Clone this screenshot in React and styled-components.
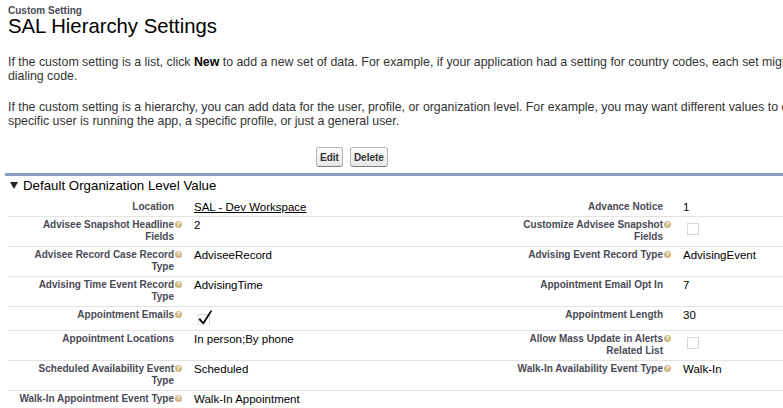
import React from 'react'
import styled, { createGlobalStyle } from 'styled-components'

const GlobalStyle = createGlobalStyle`
  html, body {
    margin: 0;
    padding: 0;
    background: #fff;
    overflow: hidden;
  }
  body {
    font-family: Arial, "Liberation Sans", Helvetica, sans-serif;
    color: #000;
  }
`

const Page = styled.div`
  width: 978px;
  padding: 5px 8px 0 8px;
`

const Kicker = styled.div`
  font-size: 10px;
  font-weight: bold;
  line-height: 11px;
  color: #4a4a56;
`

const Title = styled.h1`
  margin: 0;
  font-size: 20.3px;
  font-weight: normal;
  line-height: 20px;
  color: #000;
`

const Description = styled.div`
  margin-top: 19px;
  font-size: 12.35px;
  line-height: 14px;
  color: #333;

  p {
    margin: 0 0 17px 0;
  }
  p:last-child {
    margin-bottom: 0;
  }
  b {
    color: #000;
  }
`

const ButtonBar = styled.div`
  display: flex;
  gap: 7px;
  padding-left: 308px;
  margin-top: 19px;
`

const Button = styled.button`
  font-family: Arial, "Liberation Sans", sans-serif;
  font-size: 10px;
  font-weight: bold;
  color: #333;
  height: 20px;
  padding: 0 3px;
  border: 1px solid #b5b5b5;
  border-bottom-color: #7f7f7f;
  border-radius: 3px;
  background: linear-gradient(#fdfdfd, #e6e6e6);
`

const Block = styled.div`
  margin-top: 6px;
  margin-left: -3px;
  border-top: 3px solid #8e9dbd;
`

const SectionHeader = styled.h3`
  display: flex;
  align-items: center;
  gap: 5px;
  margin: 0;
  padding: 0 0 4px 5px;
  height: 23px;
  box-sizing: border-box;
  font-size: 13.3px;
  font-weight: normal;
  color: #000;
`

const Triangle = styled.span`
  width: 0;
  height: 0;
  border-left: 4px solid transparent;
  border-right: 4px solid transparent;
  border-top: 7px solid #222;
`

const Grid = styled.div`
  margin-left: 3px;
  display: grid;
  grid-template-columns: 18% 32% 18% 32%;
`

const Row = styled.div`
  display: contents;

  & > div {
    border-bottom: 1px solid ${p => (p.$last ? 'transparent' : '#e3e3e3')};
  }
`

const Label = styled.div`
  position: relative;
  text-align: right;
  padding: 2px 10px 3px 7px;
  font-size: 10px;
  font-weight: bold;
  line-height: 12px;
  color: #4a4a56;
`

const Value = styled.div`
  padding: 2px 2px 3px 10px;
  font-size: 11.5px;
  line-height: 12px;
  color: #000;

  a {
    color: #000;
    text-decoration: underline;
  }
`

/* help orb hangs just right of the first label line */
const Help = styled.span`
  position: absolute;
  top: 4px;
  right: 2px;
  width: 7px;
  height: 7px;
  border-radius: 50%;
  background: #d2b781;
  color: #fff;
  font-size: 6px;
  line-height: 7px;
  text-align: center;
`

const CheckIcon = styled.svg`
  display: block;
  margin-bottom: ${p => (p.$checked ? '2px' : '0')};
`

function Checkbox({ checked }) {
  return (
    <CheckIcon $checked={checked} width="21" height="16" viewBox="0 0 21 16">
      <rect x="4.5" y={checked ? 5.5 : 4.5} width="11" height="11" fill="none" stroke="#b0b0b0" strokeDasharray="1 1" />
      {checked && (
        <path d="M6 9.5 L9.2 13.5 L17 1.5 L17.6 2.2 L9.4 15.2 L5 10.6 Z" fill="#000" stroke="#000" strokeWidth="0.8" strokeLinejoin="round" />
      )}
    </CheckIcon>
  )
}

const rows = [
  [{ label: 'Location', value: <a>SAL - Dev Workspace</a> }, { label: 'Advance Notice', value: '1' }],
  [{ label: 'Advisee Snapshot Headline Fields', help: true, value: '2' }, { label: 'Customize Advisee Snapshot Fields', help: true, value: <Checkbox /> }],
  [{ label: 'Advisee Record Case Record Type', help: true, value: 'AdviseeRecord' }, { label: 'Advising Event Record Type', help: true, value: 'AdvisingEvent' }],
  [{ label: 'Advising Time Event Record Type', help: true, value: 'AdvisingTime' }, { label: 'Appointment Email Opt In', value: '7' }],
  [{ label: 'Appointment Emails', help: true, value: <Checkbox checked /> }, { label: 'Appointment Length', value: '30' }],
  [{ label: 'Appointment Locations', value: 'In person;By phone' }, { label: 'Allow Mass Update in Alerts Related List', help: true, value: <Checkbox /> }],
  [{ label: 'Scheduled Availability Event Type', help: true, value: 'Scheduled' }, { label: 'Walk-In Availability Event Type', help: true, value: 'Walk-In' }],
  [{ label: 'Walk-In Appointment Event Type', help: true, value: 'Walk-In Appointment' }, null],
]

export default function App() {
  return (
    <>
      <GlobalStyle />
      <Page>
        <Kicker>Custom Setting</Kicker>
        <Title>SAL Hierarchy Settings</Title>
        <Description>
          <p>
            If the custom setting is a list, click <b>New</b> to add a new set of data. For example, if your application had a setting for country codes, each set might include the country's name and dialing code.
          </p>
          <p>
            If the custom setting is a hierarchy, you can add data for the user, profile, or organization level. For example, you may want different values to display depending on whether a specific user is running the app, a specific profile, or just a general user.
          </p>
        </Description>
        <ButtonBar>
          <Button>Edit</Button>
          <Button>Delete</Button>
        </ButtonBar>
        <Block>
          <SectionHeader>
            <Triangle />
            Default Organization Level Value
          </SectionHeader>
          <Grid>
            {rows.map((r, i) => (
              <Row key={i} $last={i === rows.length - 1}>
                {r.map((c, j) =>
                  c ? (
                    <React.Fragment key={j}>
                      <Label>
                        {c.label}
                        {c.help && <Help>?</Help>}
                      </Label>
                      <Value>{c.value}</Value>
                    </React.Fragment>
                  ) : (
                    <React.Fragment key={j}>
                      <Label />
                      <Value />
                    </React.Fragment>
                  )
                )}
              </Row>
            ))}
          </Grid>
        </Block>
      </Page>
    </>
  )
}
